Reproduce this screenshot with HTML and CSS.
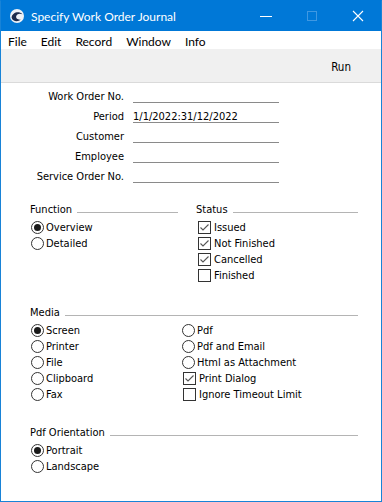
FILE: index.html
```html
<!DOCTYPE html>
<html lang="en">
<head>
<meta charset="utf-8">
<title>Specify Work Order Journal</title>
<link rel="stylesheet" href="styles.css">
</head>
<body>
<div class="window">
  <div class="titlebar">
    <svg class="app-icon" width="14" height="14" viewBox="0 0 14 14">
      <circle cx="7" cy="7" r="7" fill="#eef2f7"/>
      <path d="M1.6 8.6 C2.2 3.6 8.6 1.6 12.4 5.2 C9.6 3.9 6.4 5 6.1 7.6 C5.9 9.6 7.8 11 10.6 10.6 C8.4 13.4 2.4 12.8 1.6 8.6 Z" fill="#1d2b4c"/>
    </svg>
    <span class="title">Specify Work Order Journal</span>
    <div class="controls">
      <div class="ctl"><svg width="12" height="12" viewBox="0 0 12 12"><line x1="0" y1="6.5" x2="12" y2="6.5" stroke="#fff" stroke-width="1"/></svg></div>
      <div class="ctl"><svg width="12" height="12" viewBox="0 0 12 12"><rect x="1.5" y="1.5" width="9" height="9" fill="none" stroke="#3f98e2" stroke-width="1"/></svg></div>
      <div class="ctl"><svg width="12" height="12" viewBox="0 0 12 12"><path d="M1 1 L11 11 M11 1 L1 11" stroke="#fff" stroke-width="1.1"/></svg></div>
    </div>
  </div>
  <div class="menubar">
    <span class="menu-item">File</span>
    <span class="menu-item">Edit</span>
    <span class="menu-item">Record</span>
    <span class="menu-item">Window</span>
    <span class="menu-item">Info</span>
  </div>
  <div class="toolbar">
    <span class="tool-btn">Run</span>
  </div>
  <div class="content">
    <div class="form">
      <div class="form-row"><span class="label">Work Order No.</span><span class="field"></span></div>
      <div class="form-row"><span class="label">Period</span><span class="field">1/1/2022:31/12/2022</span></div>
      <div class="form-row"><span class="label">Customer</span><span class="field"></span></div>
      <div class="form-row"><span class="label">Employee</span><span class="field"></span></div>
      <div class="form-row"><span class="label">Service Order No.</span><span class="field"></span></div>
    </div>

    <div class="pair first">
      <div class="group">
        <div class="group-header"><span>Function</span><span class="rule"></span></div>
        <div class="options">
          <div class="option"><span class="radio on"></span>Overview</div>
          <div class="option"><span class="radio"></span>Detailed</div>
        </div>
      </div>
      <div class="group">
        <div class="group-header"><span>Status</span><span class="rule"></span></div>
        <div class="options">
          <div class="option"><span class="check on"><svg width="11" height="11" viewBox="0 0 11 11"><path d="M1.5 5.5 L4 8 L9.5 2.5" fill="none" stroke="#555" stroke-width="1.1"/></svg></span>Issued</div>
          <div class="option"><span class="check on"><svg width="11" height="11" viewBox="0 0 11 11"><path d="M1.5 5.5 L4 8 L9.5 2.5" fill="none" stroke="#555" stroke-width="1.1"/></svg></span>Not Finished</div>
          <div class="option"><span class="check on"><svg width="11" height="11" viewBox="0 0 11 11"><path d="M1.5 5.5 L4 8 L9.5 2.5" fill="none" stroke="#555" stroke-width="1.1"/></svg></span>Cancelled</div>
          <div class="option"><span class="check"></span>Finished</div>
        </div>
      </div>
    </div>

    <div class="group section">
      <div class="group-header"><span>Media</span><span class="rule"></span></div>
      <div class="media-grid">
        <div class="options">
          <div class="option"><span class="radio on"></span>Screen</div>
          <div class="option"><span class="radio"></span>Printer</div>
          <div class="option"><span class="radio"></span>File</div>
          <div class="option"><span class="radio"></span>Clipboard</div>
          <div class="option"><span class="radio"></span>Fax</div>
        </div>
        <div class="options">
          <div class="option"><span class="radio"></span>Pdf</div>
          <div class="option"><span class="radio"></span>Pdf and Email</div>
          <div class="option"><span class="radio"></span>Html as Attachment</div>
          <div class="option"><span class="check on"><svg width="11" height="11" viewBox="0 0 11 11"><path d="M1.5 5.5 L4 8 L9.5 2.5" fill="none" stroke="#555" stroke-width="1.1"/></svg></span>Print Dialog</div>
          <div class="option"><span class="check"></span>Ignore Timeout Limit</div>
        </div>
      </div>
    </div>

    <div class="group section orientation">
      <div class="group-header"><span>Pdf Orientation</span><span class="rule"></span></div>
      <div class="options">
        <div class="option"><span class="radio on"></span>Portrait</div>
        <div class="option"><span class="radio"></span>Landscape</div>
      </div>
    </div>
  </div>
</div>
</body>
</html>
```
FILE: styles.css
```css
* { box-sizing: border-box; }

html, body {
  margin: 0;
  padding: 0;
  background: #ffffff;
}

.window {
  width: 382px;
  height: 502px;
  border: 1px solid #1883d7;
  border-top: 1px solid #0078d7;
  background: #ffffff;
  display: flex;
  flex-direction: column;
  overflow: hidden;
  font-family: "DejaVu Sans Condensed", "DejaVu Sans", sans-serif;
  font-stretch: condensed;
  font-size: 11px;
  color: #000;
}

/* Title bar */
.titlebar {
  height: 30px;
  background: #0078d7;
  display: flex;
  align-items: center;
  color: #fff;
  flex: none;
}
.app-icon {
  margin-left: 9px;
  flex: none;
}
.title {
  margin-left: 7px;
  font-family: "Lato", "Open Sans", sans-serif;
  font-stretch: normal;
  font-size: 12px;
  padding-top: 1px;
}
.controls {
  margin-left: auto;
  display: flex;
  height: 100%;
}
.ctl {
  width: 46px;
  height: 100%;
  display: flex;
  align-items: center;
  justify-content: center;
}

/* Menu bar */
.menubar {
  height: 18px;
  display: flex;
  align-items: center;
  background: #fff;
  flex: none;
  font-family: "Lato", "Open Sans", sans-serif;
  font-stretch: normal;
  font-size: 12px;
  padding-top: 2px;
}
.menu-item {
  padding: 0 7px;
}

/* Toolbar */
.toolbar {
  height: 34px;
  background: #f0f0f0;
  border-bottom: 1px solid #dadada;
  display: flex;
  align-items: center;
  justify-content: flex-end;
  flex: none;
  padding-top: 3px;
  padding-right: 30px;
}
.tool-btn {
  font-size: 11.5px;
}

/* Content */
.content {
  padding: 7px 23px 0 29px;
}

.form-row {
  display: grid;
  grid-template-columns: 94px 146px;
  column-gap: 9px;
  height: 20px;
}
.label {
  text-align: right;
  line-height: 13px;
}
.field {
  height: 13px;
  line-height: 13px;
  border-bottom: 1px solid #8a8a8a;
  white-space: nowrap;
}

.pair {
  display: grid;
  grid-template-columns: 148px 1fr;
  column-gap: 18px;
  margin-top: 13px;
}

.section {
  margin-top: 23px;
}
.orientation {
  margin-top: 24px;
}

.group-header {
  display: flex;
  height: 14px;
  line-height: 14px;
}
.rule {
  flex: 1;
  height: 0;
  margin-left: 5px;
  margin-top: 9px;
  border-top: 1px solid #b4b4b4;
}

.options {
  margin-top: 2px;
}
.option {
  height: 16px;
  display: flex;
  align-items: center;
  white-space: nowrap;
}

.radio {
  width: 13px;
  height: 13px;
  border: 1px solid #333;
  border-radius: 50%;
  margin-left: 1px;
  margin-right: 2px;
  display: flex;
  align-items: center;
  justify-content: center;
  flex: none;
  background: #fff;
}
.radio.on::after {
  content: "";
  width: 7px;
  height: 7px;
  border-radius: 50%;
  background: #1a1a1a;
}

.check {
  width: 13px;
  height: 13px;
  border: 1px solid #333;
  margin-left: 2px;
  margin-right: 3px;
  flex: none;
  background: #fff;
  display: flex;
}

.media-grid {
  display: grid;
  grid-template-columns: 151px 1fr;
}
```
